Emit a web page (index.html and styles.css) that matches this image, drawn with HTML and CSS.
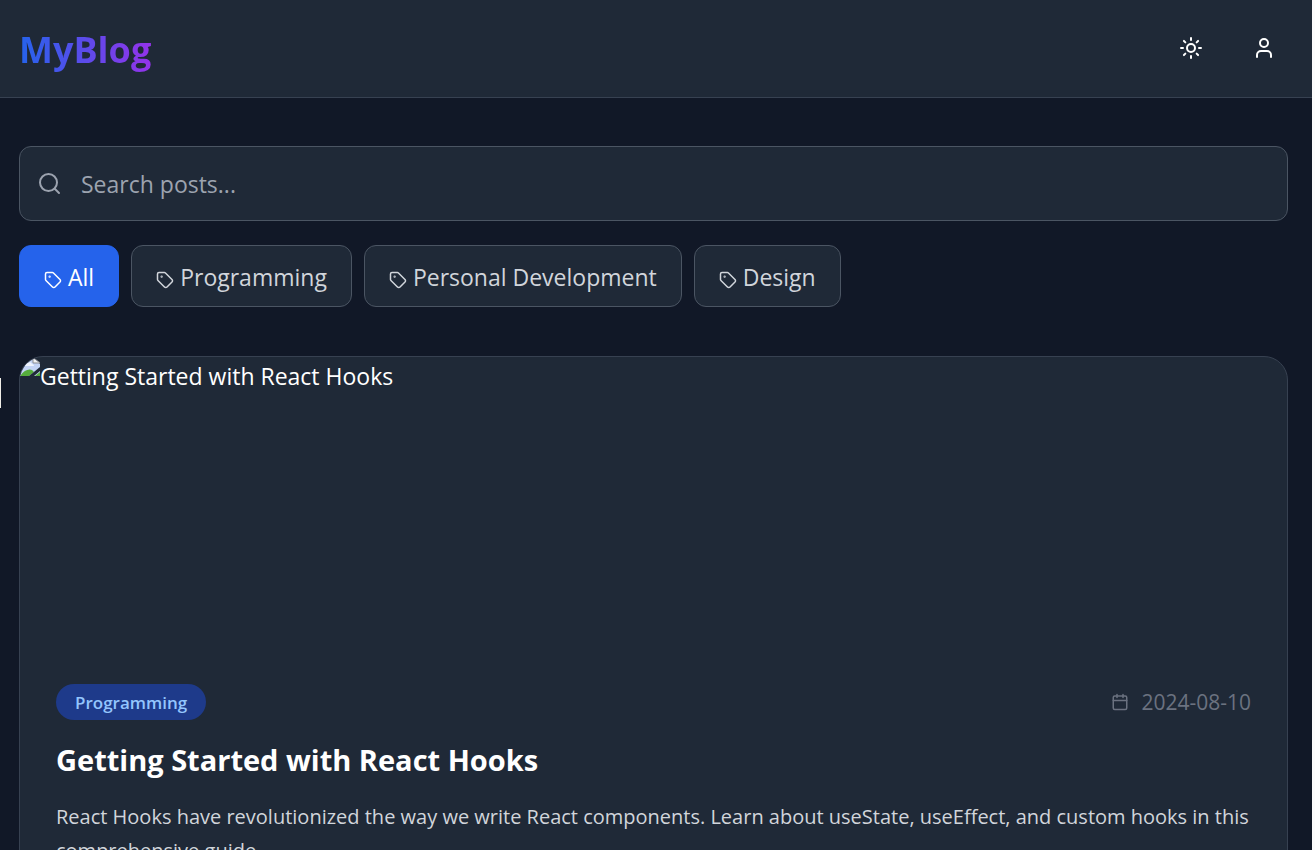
FILE: index.html
```html
<!DOCTYPE html>
<html lang="en">
<head>
<meta charset="utf-8">
<meta name="viewport" content="width=device-width, initial-scale=1">
<title>MyBlog</title>
<link rel="stylesheet" href="styles.css">
</head>
<body>
<svg class="sprite" aria-hidden="true">
  <symbol id="tag" viewBox="0 0 24 24"><path d="M12.6 2.6A2 2 0 0 0 11.2 2H4a2 2 0 0 0-2 2v7.2a2 2 0 0 0 .6 1.4l8.7 8.7a2.4 2.4 0 0 0 3.4 0l6.6-6.6a2.4 2.4 0 0 0 0-3.4z"/><circle cx="7.5" cy="7.5" r=".5" fill="currentColor"/></symbol>
</svg>
<div class="page">
  <header class="header">
    <a class="logo" href="#">MyBlog</a>
    <div class="actions">
      <button class="icon-button" type="button" aria-label="Toggle theme">
        <svg class="icon" viewBox="0 0 24 24"><circle cx="12" cy="12" r="4"/><path d="M12 2v2M12 20v2M4.93 4.93l1.41 1.41M17.66 17.66l1.41 1.41M2 12h2M20 12h2M6.34 17.66l-1.41 1.41M19.07 4.93l-1.41 1.41"/></svg>
      </button>
      <button class="icon-button" type="button" aria-label="Account">
        <svg class="icon" viewBox="0 0 24 24"><path d="M19 21v-2a4 4 0 0 0-4-4H9a4 4 0 0 0-4 4v2"/><circle cx="12" cy="7" r="4"/></svg>
      </button>
    </div>
  </header>
  <main class="main">
    <label class="search">
      <svg class="icon search-icon" viewBox="0 0 24 24" aria-hidden="true"><circle cx="11.5" cy="10.5" r="8.5"/><path d="m22 21-4-4"/></svg>
      <input class="search-input" type="text" placeholder="Search posts..." aria-label="Search posts">
    </label>
    <div class="filters">
      <button class="filter filter-active" type="button"><svg class="tag-icon" aria-hidden="true"><use href="#tag"/></svg>All</button>
      <button class="filter" type="button"><svg class="tag-icon" aria-hidden="true"><use href="#tag"/></svg>Programming</button>
      <button class="filter" type="button"><svg class="tag-icon" aria-hidden="true"><use href="#tag"/></svg>Personal Development</button>
      <button class="filter" type="button"><svg class="tag-icon" aria-hidden="true"><use href="#tag"/></svg>Design</button>
    </div>
    <article class="card">
      <div class="cover">
        <svg class="broken" viewBox="0 0 20 20" aria-hidden="true"><path fill="#c3d3f4" d="M0 0h13l7 7v12H0z"/><path fill="#eef3fd" d="M5 9q0-3 3-3 3-2 4 1 2 0 2 2z"/><path fill="#f1f1f1" stroke="#8b8d91" d="M13 1v5h7z"/><path fill="#56ad3c" d="M0 19q6-8 12-6l2 2-5 4z"/><path fill="#1f2937" d="M9 19l11-9v4l-6 5z"/><path fill="#56ad3c" d="M15 19l5-4v4z"/></svg>
        <span>Getting Started with React Hooks</span>
      </div>
      <div class="content">
        <div class="meta">
          <span class="badge">Programming</span>
          <span class="date"><svg class="date-icon" viewBox="0 0 24 24" aria-hidden="true"><rect x="3" y="4" width="18" height="18" rx="2"/><path d="M8 2v4M16 2v4M3 10h18"/></svg><time datetime="2024-08-10">2024-08-10</time></span>
        </div>
        <h2 class="title">Getting Started with React Hooks</h2>
        <p class="excerpt">React Hooks have revolutionized the way we write React components. Learn about useState, useEffect, and custom hooks in this comprehensive guide.</p>
      </div>
    </article>
  </main>
  <div class="edge-handle"></div>
</div>
</body>
</html>
```

FILE: styles.css
```css
* { box-sizing: border-box; }
html { background: #fcfcfc; }
body {
  margin: 0 3px 0 0;
  height: 100vh;
  overflow: hidden;
  font-family: "Open Sans", "Noto Sans", sans-serif;
  font-size: 23px;
  color: #fff;
}
svg { fill: none; stroke: currentColor; stroke-width: 2; stroke-linecap: round; stroke-linejoin: round; }
button, input { font: inherit; color: inherit; margin: 0; }
.sprite { position: absolute; width: 0; height: 0; }
.page { position: relative; min-height: 100vh; background: #111827; }
.header {
  display: flex;
  align-items: center;
  justify-content: space-between;
  padding: 18px 24px 19px 19px;
  background: #1f2937;
  border-bottom: 1px solid #374151;
}
.logo {
  padding-top: 4px;
  font-size: 36px;
  line-height: 56px;
  font-weight: 700;
  text-decoration: none;
  color: transparent;
  background: linear-gradient(to right, #2563eb, #9333ea);
  background-clip: text;
  -webkit-background-clip: text;
}
.actions { display: flex; gap: 25px; }
.icon-button { display: flex; padding: 12px; border: 0; background: none; }
.icon { width: 24px; height: 24px; }
.main { padding: 48px 24px 48px 19px; }
.search {
  display: flex;
  align-items: center;
  gap: 20px;
  height: 75px;
  padding: 0 17px;
  background: #1f2937;
  border: 1px solid #4b5563;
  border-radius: 12px;
  color: #9ca3af;
}
.search-icon { flex: none; }
.search-input { flex: 1; min-width: 0; padding: 0; border: 0; outline: 0; background: none; }
.search-input::placeholder { color: #9ca3af; opacity: 1; }
.filters { display: flex; flex-wrap: wrap; gap: 12px; margin: 24px 0 49px; }
.filter {
  display: flex;
  align-items: center;
  gap: 6px;
  padding: 13px 24px 11px;
  line-height: 36px;
  color: #d1d5db;
  background: #1f2937;
  border: 1px solid #4b5563;
  border-radius: 12px;
}
.filter-active { color: #fff; background: #2563eb; border-color: #2563eb; }
.tag-icon { width: 18px; height: 18px; margin-top: 6px; }
.card { overflow: hidden; background: #1f2937; border: 1px solid #374151; border-radius: 24px; }
.cover { display: flex; height: 288px; line-height: 38px; }
.broken { width: 20px; height: 20px; stroke-width: 1; stroke: none; }
.content { padding: 39px 36px 36px; }
.meta { display: flex; align-items: center; justify-content: space-between; }
.badge {
  padding: 7px 19px 5px;
  font-size: 17px;
  line-height: 24px;
  font-weight: 600;
  color: #93c5fd;
  background: #1e3a8a;
  border-radius: 18px;
}
.date { display: flex; align-items: center; gap: 12px; font-size: 21px; line-height: 36px; color: #6b7280; }
.date-icon { width: 18px; height: 18px; }
.title { margin: 19px 0; font-size: 29px; line-height: 42px; font-weight: 700; }
.excerpt { margin: 0; font-size: 20px; line-height: 34px; color: #d1d5db; }
.edge-handle { position: absolute; left: 0; top: 378px; width: 1px; height: 30px; background: #f0eee8; }
```
